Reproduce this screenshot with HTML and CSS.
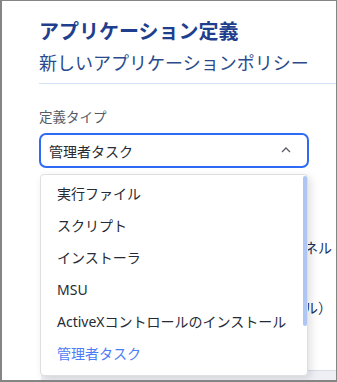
FILE: index.html
```html
<!DOCTYPE html>
<html lang="ja">
<head>
    <meta charset="UTF-8">
    <meta name="viewport" content="width=device-width, initial-scale=1.0">
    <title>アプリケーション定義</title>
    <link rel="stylesheet" href="styles.css">
</head>
<body>
    <div class="frame">
        <div class="panel">
            <h1 class="title">アプリケーション定義</h1>
            <h2 class="subtitle">新しいアプリケーションポリシー</h2>
            <div class="divider"></div>

            <div class="field">
                <label class="field-label">定義タイプ</label>
                <div class="select-wrap">
                    <div class="select open">
                        <span>管理者タスク</span>
                        <svg class="chevron" width="10" height="6" viewBox="0 0 10 6">
                            <path d="M1 5 L5 1 L9 5" fill="none" stroke="#5a5f6b" stroke-width="1.3"/>
                        </svg>
                    </div>

                    <ul class="dropdown">
                        <li>実行ファイル</li>
                        <li>スクリプト</li>
                        <li>インストーラ</li>
                        <li>MSU</li>
                        <li>ActiveXコントロールのインストール</li>
                        <li class="selected">管理者タスク</li>
                    </ul>

                    <div class="under">
                        <div class="under-row">コントロールパネル</div>
                        <div class="under-row">（インストール）</div>
                    </div>
                </div>
            </div>

            <div class="footer-bar"></div>
        </div>
    </div>
</body>
</html>
```

FILE: styles.css
```css
* {
    box-sizing: border-box;
}

body {
    margin: 0;
    font-family: 'Noto Sans', 'Noto Sans CJK JP', sans-serif;
    background: #ffffff;
}

.frame {
    width: 337px;
    height: 382px;
    border: 2px solid #858585;
    border-top-width: 1px;
    border-right-width: 1px;
    overflow: hidden;
    background: #fff;
}

.panel {
    padding-left: 37px;
    height: 100%;
    display: flex;
    flex-direction: column;
}

.title {
    margin: 17px 0 0;
    font-size: 20px;
    font-weight: 700;
    line-height: 28px;
    color: #1f3f8e;
}

.subtitle {
    margin: 3px 0 0;
    font-size: 18px;
    font-weight: 400;
    line-height: 28px;
    color: #2a4a8c;
}

.divider {
    margin-top: 6px;
    height: 1px;
    background: #d5e1f6;
}

.field {
    margin-top: 23px;
}

.field-label {
    display: block;
    font-size: 13.5px;
    line-height: 20px;
    color: #555b66;
}

.select-wrap {
    position: relative;
    margin-top: 6px;
}

.select {
    width: 270px;
    height: 35px;
    border: 2px solid #2f6af5;
    border-radius: 7px;
    display: flex;
    align-items: center;
    justify-content: space-between;
    padding: 0 16px 0 8px;
    font-size: 14px;
    color: #262a33;
}

.chevron {
    margin-top: -1px;
}

.dropdown {
    position: absolute;
    top: 41px;
    left: 1px;
    width: 268px;
    margin: 0;
    padding: 3px 0 5px;
    list-style: none;
    background: #fff;
    border: 1px solid #dedfe3;
    border-radius: 4px;
    box-shadow: 3px 3px 8px rgba(0, 0, 0, 0.12);
    z-index: 2;
}

.dropdown::after {
    content: "";
    position: absolute;
    top: 1px;
    right: 0;
    width: 4px;
    height: 150px;
    background: #adc6f4;
    border-radius: 2px;
}

.dropdown li {
    height: 32px;
    line-height: 32px;
    padding-left: 16px;
    font-size: 14px;
    color: #262a33;
    white-space: nowrap;
}

.dropdown li.selected {
    color: #4d7cf7;
}

.under {
    padding-top: 68px;
    padding-right: 4px;
    text-align: right;
    font-size: 14px;
    color: #22315a;
}

.under-row {
    height: 60px;
    line-height: 24px;
    white-space: nowrap;
}

.footer-bar {
    margin-top: auto;
    margin-left: 2px;
    height: 10px;
    background: #eef0f5;
    border-top: 1px solid #d9dde6;
}
```
